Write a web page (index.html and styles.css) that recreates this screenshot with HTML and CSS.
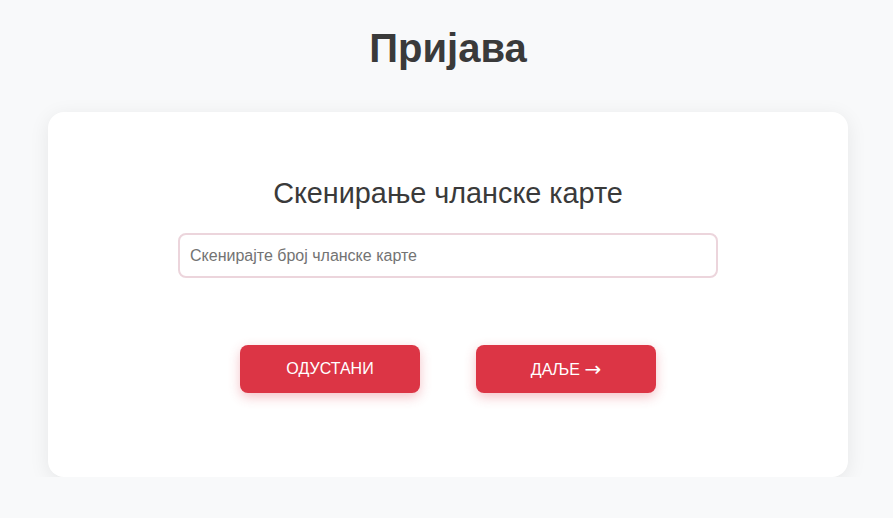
FILE: index.html
```html
<!DOCTYPE html>
<html lang="sr">
<head>
<meta charset="utf-8">
<title>Пријава</title>
<link rel="stylesheet" href="styles.css">
</head>
<body>
<main class="page">
  <h1 class="title">Пријава</h1>
  <section class="card">
    <h2 class="card-title">Скенирање чланске карте</h2>
    <input class="scan-input" type="text" placeholder="Скенирајте број чланске карте">
    <div class="actions">
      <button class="btn" type="button">ОДУСТАНИ</button>
      <button class="btn" type="button">ДАЉЕ <span class="arrow">→</span></button>
    </div>
  </section>
</main>
</body>
</html>
```

FILE: styles.css
```css
html, body {
  margin: 0;
  padding: 0;
  background: #f8f9fa;
  font-family: "Liberation Sans", Arial, sans-serif;
}

.page {
  padding: 24px 0 0 3px;
  display: flex;
  flex-direction: column;
  align-items: center;
}

.title {
  margin: 0;
  font-size: 40px;
  line-height: 48px;
  font-weight: bold;
  color: #3a3a3a;
}

.card {
  margin-top: 40px;
  width: 800px;
  box-sizing: border-box;
  background: #fff;
  border-radius: 16px;
  box-shadow: 0 4px 20px rgba(0, 0, 0, 0.08);
  padding: 64px 40px 84px;
  display: flex;
  flex-direction: column;
  align-items: center;
}

.card-title {
  margin: 0;
  font-size: 28.8px;
  line-height: 35px;
  font-weight: normal;
  color: #3a3a3a;
}

.scan-input {
  margin-top: 22px;
  width: 540px;
  height: 45px;
  box-sizing: border-box;
  border: 2px solid #ecd5dc;
  border-radius: 8px;
  padding: 0 10px;
  font-family: inherit;
  font-size: 16px;
  color: #333;
  background: #fff;
  outline: none;
}

.scan-input::placeholder {
  color: #737373;
}

.actions {
  margin-top: 67px;
  display: flex;
  gap: 56px;
}

.btn {
  width: 180px;
  height: 48px;
  border: none;
  border-radius: 8px;
  background: #dc3545;
  color: #fff;
  font-family: inherit;
  font-size: 16px;
  line-height: 20px;
  box-shadow: 0 4px 12px rgba(220, 53, 69, 0.3);
  cursor: pointer;
}

.arrow {
  font-family: "DejaVu Sans", sans-serif;
  font-size: 20px;
  line-height: 20px;
  vertical-align: -1px;
}
```
